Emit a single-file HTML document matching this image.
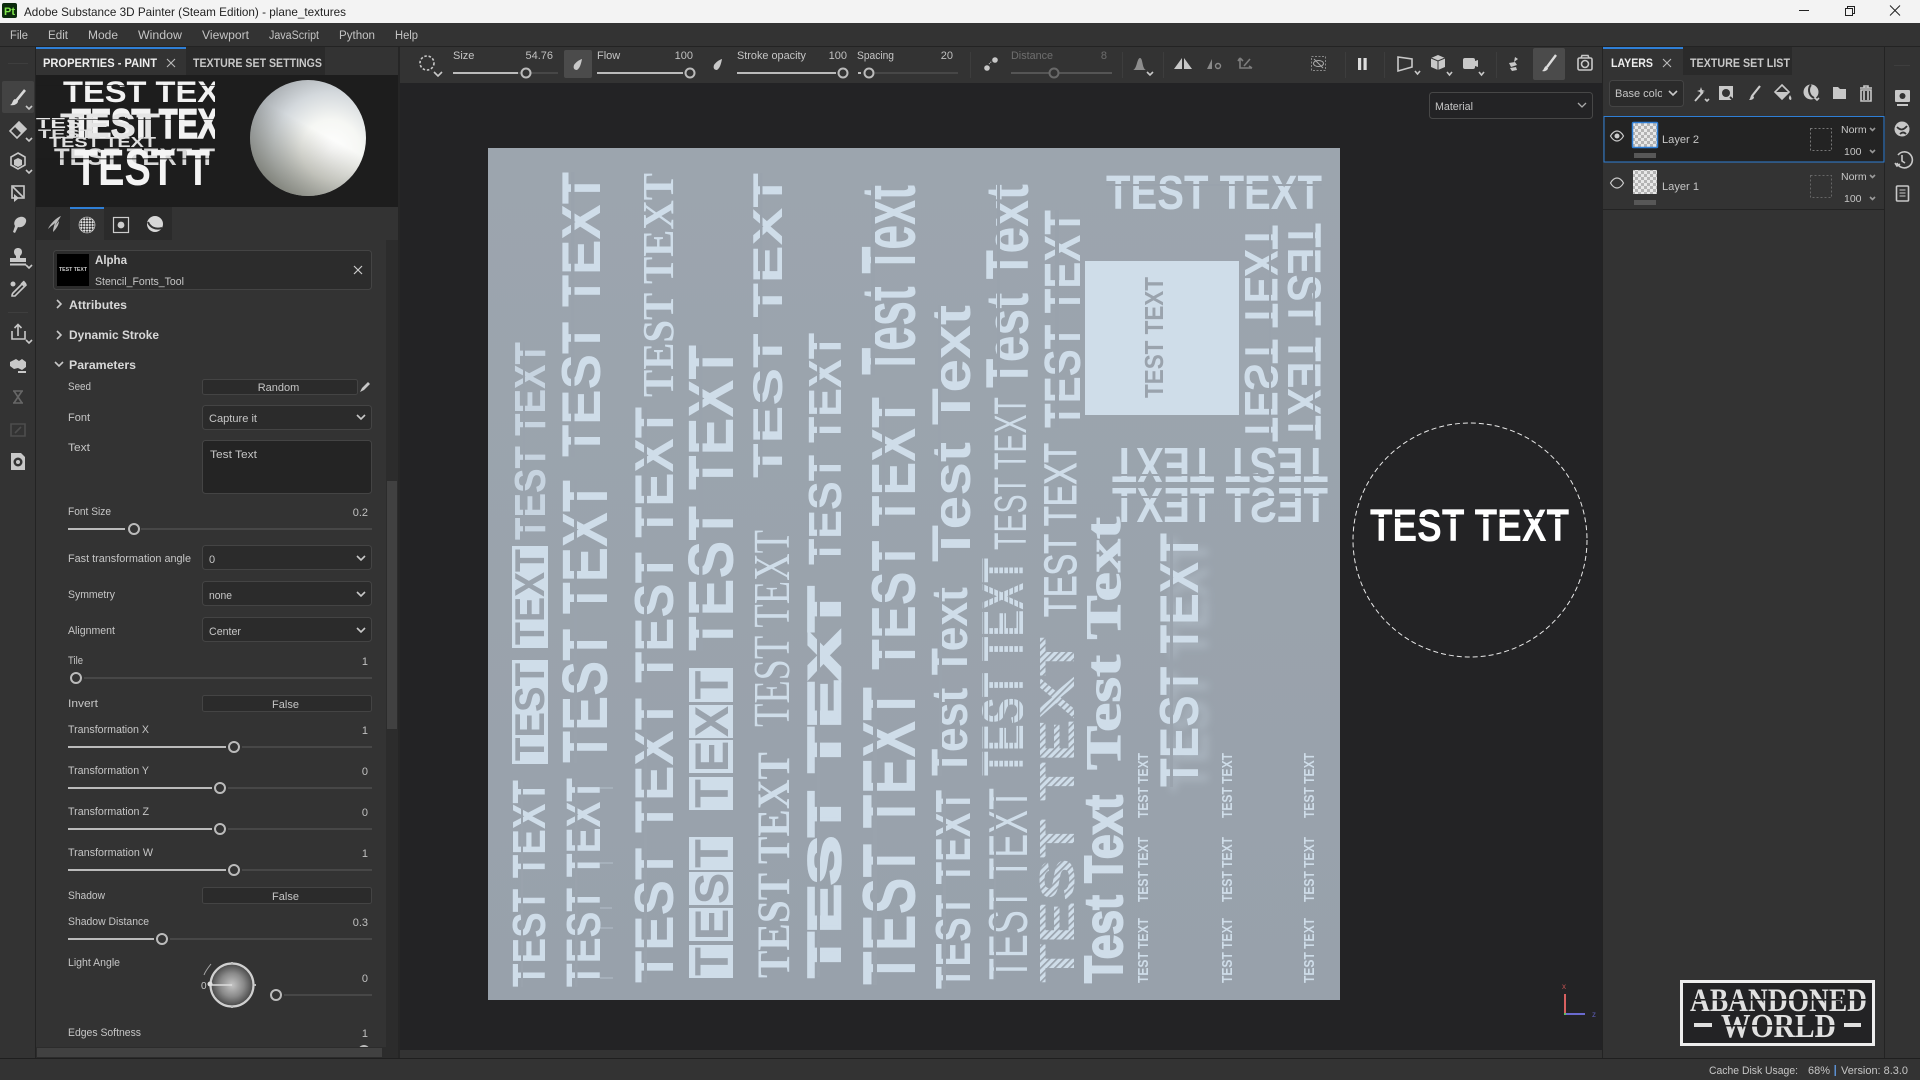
<!DOCTYPE html>
<html><head><meta charset="utf-8"><title>Adobe Substance 3D Painter</title>
<style>
html,body{margin:0;padding:0;width:1920px;height:1080px;overflow:hidden;background:#333}
svg{display:block;position:absolute;left:0;top:0}
text{font-family:"Liberation Sans",sans-serif;white-space:pre}
.l{font-size:11px;fill:#c6c6c6}
.h{font-size:12px;fill:#d8d8d8;font-weight:bold}
.m{font-size:11.5px;fill:#c4c4c4}
.t{font-size:11.5px;font-weight:bold}
.v{font-size:11px;fill:#c0c0c0;text-anchor:end}
.c text{font-weight:bold;fill:#cfdde9}
.c text.r{font-weight:normal}
.c text.s{font-family:"Liberation Serif",serif}
.c text.d{fill:#9aa3ad}
.gap rect{fill:#9aa3ad}
.ic{fill:none;stroke:#c8c8c8;stroke-width:1.6}
.if{fill:#c8c8c8;stroke:none}
.dim{opacity:.4}
</style></head><body>
<svg width="1920" height="1080" viewBox="0 0 1920 1080" xmlns="http://www.w3.org/2000/svg">
<defs>
<linearGradient id="cv" x1="0" y1="0" x2="0" y2="1"><stop offset="0" stop-color="#9ca5ae"/><stop offset="1" stop-color="#98a1ab"/></linearGradient>
<radialGradient id="sph" cx="0.7" cy="0.6" r="0.8"><stop offset="0" stop-color="#ffffff"/><stop offset=".32" stop-color="#f6f7f4"/><stop offset=".62" stop-color="#d3d8dc"/><stop offset=".9" stop-color="#a9aeb2"/><stop offset="1" stop-color="#8a8c8c"/></radialGradient>
<linearGradient id="sph2" x1=".6" y1=".45" x2=".3" y2="1"><stop offset="0" stop-color="#50503f" stop-opacity="0"/><stop offset="1" stop-color="#50503f" stop-opacity=".6"/></linearGradient>
<radialGradient id="dial" cx=".5" cy=".5" r=".5"><stop offset="0" stop-color="#c4c4c4"/><stop offset=".55" stop-color="#8a8a8a"/><stop offset="1" stop-color="#464646"/></radialGradient>
<pattern id="chk" width="6" height="6" patternUnits="userSpaceOnUse"><rect width="6" height="6" fill="#e8e8e8"/><rect width="3" height="3" fill="#b4b4b4"/><rect x="3" y="3" width="3" height="3" fill="#b4b4b4"/></pattern>
<pattern id="ck2" width="4" height="4" patternUnits="userSpaceOnUse" patternTransform="rotate(45 87 225)"><rect width="4" height="4" fill="#e2e2e2"/><rect width="2" height="2" fill="#333"/><rect x="2" y="2" width="2" height="2" fill="#333"/></pattern>
<pattern id="dots" width="5" height="5" patternUnits="userSpaceOnUse"><rect width="5" height="5" fill="#cfdde9"/><rect y="0" width="5" height="1.3" fill="#9aa3ad"/></pattern>
<pattern id="rope" width="5" height="5" patternUnits="userSpaceOnUse" patternTransform="rotate(45)"><rect width="5" height="5" fill="#cfdde9"/><rect width="5" height="1.7" fill="#9aa3ad"/></pattern>
<filter id="bl" x="-30%" y="-30%" width="160%" height="160%"><feGaussianBlur stdDeviation="4"/></filter>
<clipPath id="pv"><rect x="36" y="75" width="179" height="132"/></clipPath>
<clipPath id="bc"><rect x="1612" y="80" width="50" height="26"/></clipPath>
<clipPath id="pn"><rect x="36" y="240" width="350" height="807"/></clipPath>
</defs>

<!-- base -->
<rect width="1920" height="1080" fill="#333"/>
<!-- title bar -->
<rect width="1920" height="23" fill="#f3f3f3"/>
<rect x="2" y="3" width="15" height="15" rx="2" fill="#0b2a0c"/>
<text x="4" y="15" style="font-size:11px;font-weight:bold;fill:#7fe84a">Pt</text>
<text x="24" y="16" style="font-size:12px;fill:#222" textLength="322" lengthAdjust="spacingAndGlyphs">Adobe Substance 3D Painter (Steam Edition) - plane_textures</text>
<path d="M1799 10.5h10" stroke="#222" fill="none"/>
<path d="M1845.5 8.5h7v7h-7zM1847.5 8.5v-2h7v7h-2" stroke="#222" fill="none"/>
<path d="M1890 5.5l10 10M1900 5.5l-10 10" stroke="#222" fill="none"/>

<!-- menu -->
<rect y="23" width="1920" height="23" fill="#333"/>
<rect y="46" width="1920" height="1" fill="#232323"/>
<text class="m" x="10" y="39" textLength="18" lengthAdjust="spacingAndGlyphs">File</text>
<text class="m" x="48" y="39" textLength="20" lengthAdjust="spacingAndGlyphs">Edit</text>
<text class="m" x="88" y="39" textLength="30" lengthAdjust="spacingAndGlyphs">Mode</text>
<text class="m" x="138" y="39" textLength="44" lengthAdjust="spacingAndGlyphs">Window</text>
<text class="m" x="202" y="39" textLength="47" lengthAdjust="spacingAndGlyphs">Viewport</text>
<text class="m" x="269" y="39" textLength="50" lengthAdjust="spacingAndGlyphs">JavaScript</text>
<text class="m" x="339" y="39" textLength="36" lengthAdjust="spacingAndGlyphs">Python</text>
<text class="m" x="395" y="39" textLength="23" lengthAdjust="spacingAndGlyphs">Help</text>

<!-- viewport -->
<rect x="398" y="47" width="2" height="1011" fill="#262626"/>
<rect x="400" y="83" width="1203" height="967" fill="#232325"/>
<rect x="400" y="1050" width="1203" height="8" fill="#333"/>

<!-- canvas -->
<rect x="488" y="148" width="852" height="852" fill="url(#cv)"/>
<g class="c">
<!-- A -->
<text transform="translate(545,987) rotate(-90)" font-size="46.5" textLength="207" lengthAdjust="spacingAndGlyphs">TEST TEXT</text>
<text transform="translate(545,540) rotate(-90)" font-size="43.6" textLength="198" lengthAdjust="spacingAndGlyphs" opacity=".85">TEST TEXT</text>
<!-- B -->
<text transform="translate(600,987) rotate(-90)" font-size="48" textLength="209" lengthAdjust="spacingAndGlyphs">TEST TEXT</text>
<text transform="translate(607,763) rotate(-90)" font-size="64" textLength="283" lengthAdjust="spacingAndGlyphs">TEST TEXT</text>
<text transform="translate(600,457) rotate(-90)" font-size="55" textLength="285" lengthAdjust="spacingAndGlyphs">TEST TEXT</text>
<!-- C -->
<text transform="translate(673,983) rotate(-90)" font-size="55" textLength="285" lengthAdjust="spacingAndGlyphs">TEST TEXT</text>
<text transform="translate(673,683) rotate(-90)" font-size="55" textLength="276" lengthAdjust="spacingAndGlyphs">TEST TEXT</text>
<text class="s" transform="translate(673,397) rotate(-90)" font-size="44" textLength="224" lengthAdjust="spacingAndGlyphs">TEST TEXT</text>
<!-- D heavy -->
<text transform="translate(733,651) rotate(-90)" font-size="64" textLength="306" lengthAdjust="spacingAndGlyphs">TEST TEXT</text>
<!-- E -->
<text transform="translate(782,478) rotate(-90)" font-size="42" textLength="305" lengthAdjust="spacingAndGlyphs">TEST TEXT</text>
<text class="s r" transform="translate(789,727) rotate(-90)" font-size="52" textLength="197" lengthAdjust="spacingAndGlyphs">TEST TEXT</text>
<text class="s" transform="translate(789,978) rotate(-90)" font-size="47" textLength="226" lengthAdjust="spacingAndGlyphs">TEST TEXT</text>
<!-- F -->
<text transform="translate(841,565) rotate(-90)" font-size="46.5" textLength="232" lengthAdjust="spacingAndGlyphs">TEST TEXT</text>
<text transform="translate(840,977) rotate(-90)" font-size="45" textLength="390" lengthAdjust="spacingAndGlyphs" stroke="#cfdde9" stroke-width="2.5">TEST TEXT</text>
<!-- G -->
<text transform="translate(915,375) rotate(-90)" font-size="77" textLength="190" lengthAdjust="spacingAndGlyphs">Test Text</text>
<text transform="translate(915,670) rotate(-90)" font-size="62" textLength="273" lengthAdjust="spacingAndGlyphs">TEST TEXT</text>
<text transform="translate(915,985) rotate(-90)" font-size="75" textLength="298" lengthAdjust="spacingAndGlyphs">TEST TEXT</text>
<!-- H -->
<text transform="translate(970,562) rotate(-90)" font-size="55" textLength="257" lengthAdjust="spacingAndGlyphs">Test Text</text>
<text transform="translate(967,776) rotate(-90)" font-size="51" textLength="189" lengthAdjust="spacingAndGlyphs">Test Text</text>
<text transform="translate(970,989) rotate(-90)" font-size="49" textLength="199" lengthAdjust="spacingAndGlyphs">TEST TEXT</text>
<!-- I -->
<text transform="translate(1028,388) rotate(-90)" font-size="60" textLength="204" lengthAdjust="spacingAndGlyphs">Test Text</text>
<text class="r" transform="translate(1026,550) rotate(-90)" font-size="45" textLength="153" lengthAdjust="spacingAndGlyphs">TEST TEXT</text>
<text style="fill:url(#dots)" transform="translate(1023,776) rotate(-90)" font-size="58" textLength="218" lengthAdjust="spacingAndGlyphs">TEST TEXT</text>
<text class="r" transform="translate(1027,980) rotate(-90)" font-size="55" textLength="192" lengthAdjust="spacingAndGlyphs">TEST TEXT</text>
<!-- J -->
<text transform="translate(1080,428) rotate(-90)" font-size="51" textLength="218" lengthAdjust="spacingAndGlyphs">TEST TEXT</text>
<text class="r" transform="translate(1076,617) rotate(-90)" font-size="45" textLength="174" lengthAdjust="spacingAndGlyphs" stroke="#cfdde9">TEST TEXT</text>
<text style="fill:url(#rope)" transform="translate(1074,983) rotate(-90)" font-size="49" textLength="346" lengthAdjust="spacingAndGlyphs">TEST TEXT</text>
<!-- K -->
<text transform="translate(1122,983) rotate(-90)" font-size="54" textLength="188" lengthAdjust="spacingAndGlyphs" stroke="#cfdde9" stroke-width="2">Test Text</text>
<text class="s" transform="translate(1120,770) rotate(-90)" font-size="50" textLength="253" lengthAdjust="spacingAndGlyphs" stroke="#cfdde9">Test Text</text>
<!-- small columns -->
<g font-size="14.5">
<text transform="translate(1148,818) rotate(-90)" textLength="65" lengthAdjust="spacingAndGlyphs">TEST TEXT</text>
<text transform="translate(1148,902) rotate(-90)" textLength="65" lengthAdjust="spacingAndGlyphs">TEST TEXT</text>
<text transform="translate(1148,983) rotate(-90)" textLength="65" lengthAdjust="spacingAndGlyphs">TEST TEXT</text>
<text transform="translate(1232,818) rotate(-90)" textLength="65" lengthAdjust="spacingAndGlyphs">TEST TEXT</text>
<text transform="translate(1232,902) rotate(-90)" textLength="65" lengthAdjust="spacingAndGlyphs">TEST TEXT</text>
<text transform="translate(1232,983) rotate(-90)" textLength="65" lengthAdjust="spacingAndGlyphs">TEST TEXT</text>
<text transform="translate(1314,818) rotate(-90)" textLength="65" lengthAdjust="spacingAndGlyphs">TEST TEXT</text>
<text transform="translate(1314,902) rotate(-90)" textLength="65" lengthAdjust="spacingAndGlyphs">TEST TEXT</text>
<text transform="translate(1314,983) rotate(-90)" textLength="65" lengthAdjust="spacingAndGlyphs">TEST TEXT</text>
</g>
<!-- M with soft shadow -->
<text transform="translate(1208,792) rotate(-90)" font-size="55" textLength="254" lengthAdjust="spacingAndGlyphs" filter="url(#bl)" opacity=".3">TEST TEXT</text>
<text transform="translate(1198,787) rotate(-90)" font-size="55" textLength="254" lengthAdjust="spacingAndGlyphs">TEST TEXT</text>
<!-- top right -->
<text x="1106" y="209" font-size="48" textLength="216" lengthAdjust="spacingAndGlyphs">TEST TEXT</text>
<text transform="translate(1288,223) rotate(90)" font-size="47" textLength="217" lengthAdjust="spacingAndGlyphs">TEST TEXT</text>
<text transform="matrix(0,-1,-1,0,1245,442)" font-size="47" textLength="217" lengthAdjust="spacingAndGlyphs">TEST TEXT</text>
<text transform="translate(1328,448) rotate(180)" font-size="49" textLength="216" lengthAdjust="spacingAndGlyphs">TEST TEXT</text>
<text transform="matrix(-1,0,0,1,1328,522)" font-size="49" textLength="216" lengthAdjust="spacingAndGlyphs">TEST TEXT</text>
</g>
<!-- stencil gaps -->
<g class="gap">
<rect x="521" y="780" width="2" height="207"/>
<rect x="523" y="342" width="2" height="198"/>
<rect x="575" y="778" width="2.5" height="209"/>
<rect x="574" y="480" width="3" height="283"/>
<rect x="571" y="172" width="3.500" height="285"/>
<rect x="644" y="698" width="3" height="285"/>
<rect x="644" y="407" width="3" height="276"/>
<rect x="699" y="345" width="3.500" height="306"/>
<rect x="760" y="173" width="2.500" height="305"/>
<rect x="817" y="333" width="2.500" height="232"/>
<rect x="817" y="587" width="3" height="390"/>
<rect x="871" y="185" width="4" height="190"/>
<rect x="882" y="397" width="3" height="273"/>
<rect x="873" y="687" width="4" height="298"/>
<rect x="938" y="305" width="3" height="257"/>
<rect x="939" y="587" width="3" height="189"/>
<rect x="943" y="790" width="3" height="199"/>
<rect x="997" y="184" width="3" height="204"/>
<rect x="994" y="788" width="2" height="192"/>
<rect x="1055" y="210" width="4" height="218"/>
<rect x="1170" y="533" width="3" height="254"/>
<rect x="1106" y="184" width="216" height="2"/>
<rect x="1313" y="223" width="2" height="217"/>
<rect x="1269" y="225" width="2" height="217"/>
<rect x="1112" y="474" width="216" height="2"/>
<rect x="1112" y="496" width="216" height="2"/>
</g>
<!-- boxed text on top of the stencil columns -->
<g class="c">
<rect x="512" y="660" width="36" height="104" fill="#cfdde9"/><rect x="512" y="546" width="36" height="102" fill="#cfdde9"/>
<text class="d" transform="translate(544,761) rotate(-90)" font-size="42" textLength="98" lengthAdjust="spacingAndGlyphs">TEST</text>
<text class="d" transform="translate(544,645) rotate(-90)" font-size="42" textLength="96" lengthAdjust="spacingAndGlyphs">TEXT</text>
<rect x="689" y="945" width="44" height="33" fill="#cfdde9"/><rect x="689" y="908" width="44" height="33" fill="#cfdde9"/><rect x="689" y="872" width="44" height="33" fill="#cfdde9"/><rect x="689" y="837" width="44" height="33" fill="#cfdde9"/>
<rect x="689" y="777" width="44" height="33" fill="#cfdde9"/><rect x="689" y="740" width="44" height="33" fill="#cfdde9"/><rect x="689" y="705" width="44" height="33" fill="#cfdde9"/><rect x="689" y="668" width="44" height="34" fill="#cfdde9"/>
<g text-anchor="middle">
<text class="d" transform="translate(728,961.5) rotate(-90)" font-size="47">T</text>
<text class="d" transform="translate(728,924.5) rotate(-90)" font-size="47">E</text>
<text class="d" transform="translate(728,888.5) rotate(-90)" font-size="47">S</text>
<text class="d" transform="translate(728,853.5) rotate(-90)" font-size="47">T</text>
<text class="d" transform="translate(728,793.5) rotate(-90)" font-size="47">T</text>
<text class="d" transform="translate(728,756.5) rotate(-90)" font-size="47">E</text>
<text class="d" transform="translate(728,721.5) rotate(-90)" font-size="47">X</text>
<text class="d" transform="translate(728,685) rotate(-90)" font-size="47">T</text>
</g>
<rect x="1085" y="261" width="154" height="154" fill="#cfdde9"/>
<text class="d" transform="translate(1163,398) rotate(-90)" font-size="26" textLength="121" lengthAdjust="spacingAndGlyphs">TEST TEXT</text>
</g>
<!-- streaks beside column B -->
<path d="M600 788h13M600 863h13M600 908h12M600 928h13M600 978h13" stroke="#cfdde9" opacity=".5" fill="none"/>

<!-- brush circle -->
<circle cx="1470" cy="540" r="117" fill="none" stroke="#e8e8e8" stroke-width="1" stroke-dasharray="5 3"/>
<text x="1370" y="541" style="font-size:45px;font-weight:bold;fill:#fff" textLength="199" lengthAdjust="spacingAndGlyphs">TEST TEXT</text>
<rect x="1370" y="517" width="199" height="1.5" fill="#232325"/>

<!-- material dropdown -->
<rect x="1429.5" y="92.5" width="163" height="26" rx="3" fill="#232325" stroke="#474747"/>
<text class="l" x="1435" y="110" textLength="38" lengthAdjust="spacingAndGlyphs">Material</text>
<path d="M1578 103l4 4 4-4" fill="none" stroke="#aaa" stroke-width="1.3"/>

<!-- axis -->
<path d="M1565 994v20" stroke="#d86060" stroke-width="2"/><path d="M1565 1014h20" stroke="#6a6ad0" stroke-width="2"/>
<rect x="1564" y="1013" width="2" height="2" fill="#5fc05f"/>
<text x="1562" y="989" style="font-size:8px;fill:#c05050">x</text>
<text x="1592" y="1017" style="font-size:8px;fill:#5a5ab0">z</text>

<!-- toolbar -->
<rect x="400" y="47" width="1203" height="36" fill="#333"/>
<circle cx="427" cy="63" r="7" class="ic" stroke-dasharray="2.5 1.8" fill="none"/>
<path d="M434 72l4 4 4-4" class="ic" stroke-width="1.1"/>
<text class="l" x="453" y="59">Size</text><text class="v" x="553" y="59">54.76</text>
<path d="M453 73h105" stroke="#474747" stroke-width="2"/><path d="M453 73h65" stroke="#bbb" stroke-width="2"/><circle cx="526" cy="73" r="4.5" fill="#333" stroke="#bbb" stroke-width="2"/>
<rect x="564" y="50" width="28" height="28" rx="2" fill="#4b4b4b"/>
<path d="M582 59c-1 5-2 9-5 11-3 0-4-2-3-5 2-3 5-5 8-6z" class="if"/>
<text class="l" x="597" y="59">Flow</text><text class="v" x="693" y="59">100</text>
<path d="M597 73h86" stroke="#bbb" stroke-width="2"/><circle cx="690" cy="73" r="4.5" fill="#333" stroke="#bbb" stroke-width="2"/>
<path d="M722 59c-1 5-2 9-5 11-3 0-4-2-3-5 2-3 5-5 8-6z" class="if"/>
<text class="l" x="737" y="59" textLength="69" lengthAdjust="spacingAndGlyphs">Stroke opacity</text><text class="v" x="847" y="59">100</text>
<path d="M737 73h99" stroke="#bbb" stroke-width="2"/><circle cx="843" cy="73" r="4.5" fill="#333" stroke="#bbb" stroke-width="2"/>
<text class="l" x="857" y="59" textLength="37" lengthAdjust="spacingAndGlyphs">Spacing</text><text class="v" x="953" y="59">20</text>
<path d="M875 73h83" stroke="#474747" stroke-width="2"/><path d="M858 73h3" stroke="#bbb" stroke-width="2"/><circle cx="869" cy="73" r="4.5" fill="#333" stroke="#bbb" stroke-width="2"/>
<rect x="970" y="52" width="1" height="26" fill="#3d3d3d"/>
<circle cx="987" cy="68" r="2.8" class="if"/><circle cx="995" cy="60" r="2.8" class="if"/><path d="M989 64l3-3" stroke="#c8c8c8" stroke-dasharray="1 1"/>
<g class="dim">
<text class="l" x="1011" y="59" textLength="42" lengthAdjust="spacingAndGlyphs">Distance</text><text class="v" x="1107" y="59">8</text>
<path d="M1011 73h101" stroke="#888" stroke-width="2"/><circle cx="1054" cy="73" r="4.5" fill="#333" stroke="#bbb" stroke-width="2"/>
</g>
<rect x="1122" y="52" width="1" height="26" fill="#3d3d3d"/>
<path d="M1133 70c4-1 4-12 7-12s2 11 6 12z" fill="#8d8d8d"/><path d="M1147 72l3 3 3-3" class="ic" stroke-width="1"/>
<rect x="1163" y="52" width="1" height="26" fill="#3d3d3d"/>
<path d="M1174 69l8-11v11zM1184 58l8 11h-8z" class="if"/>
<path d="M1207 69l5-10v10z" fill="#8a8a8a"/><circle cx="1218" cy="66" r="2.5" fill="none" stroke="#8a8a8a" stroke-width="1.4"/>
<path d="M1240 58v10h12M1240 58l-2 3M1240 58l3 3M1252 68l-3-2M1244 66l6-7" class="ic" stroke-width="1.1" opacity=".5"/>
<rect x="1311.5" y="56.5" width="14" height="14" fill="none" stroke="#888" stroke-dasharray="2 1.5"/><path d="M1314 59l9 9" stroke="#aaa"/><ellipse cx="1318.5" cy="63.5" rx="5" ry="3" fill="none" stroke="#aaa"/>
<rect x="1345" y="52" width="1" height="26" fill="#3d3d3d"/>
<rect x="1358" y="58" width="3.2" height="12" fill="#ddd"/><rect x="1363.5" y="58" width="3.2" height="12" fill="#ddd"/>
<rect x="1384" y="52" width="1" height="26" fill="#3d3d3d"/>
<path d="M1398 57l14 2v8l-14 4z" class="ic" stroke-width="1.3"/><path d="M1415 71l2.5 3 2.5-3" class="ic" stroke-width="1"/>
<path d="M1438 55l7 3v9l-7 3-7-3v-9z" class="if"/><path d="M1431 58l7 3 7-3M1438 61v9" stroke="#333" fill="none"/><path d="M1447 72l2.5 3 2.5-3" class="ic" stroke-width="1"/>
<rect x="1463" y="58" width="12" height="11" rx="2" class="if"/><path d="M1475 61l3-1v7l-3-1z" class="if"/><path d="M1479 72l2.5 3 2.5-3" class="ic" stroke-width="1"/>
<rect x="1496" y="52" width="1" height="26" fill="#3d3d3d"/>
<path d="M1515 57l3 2-4 3zM1509 63l6-1 2 3-6 2zM1510 68l6-1 1 3-5 1z" class="if"/>
<rect x="1533" y="48" width="32" height="32" rx="2" fill="#4b4b4b"/>
<path d="M1556 55l-9 12" stroke="#ddd" stroke-width="2.4" fill="none"/><path d="M1546 66c-2 1-2 4-4 5 3 1 6-1 6-3z" fill="#ddd"/>
<rect x="1578" y="58" width="14" height="12" rx="1.5" class="ic"/><circle cx="1585" cy="64" r="3.5" class="ic" stroke-width="1.3"/><path d="M1581 58l1-2.5h6l1 2.5" class="ic" stroke-width="1.2"/>

<!-- left strip -->
<rect x="0" y="47" width="35" height="1011" fill="#333"/>
<rect x="35" y="47" width="1" height="1011" fill="#232323"/>
<rect x="8" y="63" width="20" height="1" fill="#3e3e3e"/><rect x="8" y="312" width="20" height="1" fill="#3e3e3e"/>
<rect x="2" y="81" width="32" height="32" rx="2" fill="#434343"/>
<path d="M25 90l-9 11" stroke="#d8d8d8" stroke-width="2.6" fill="none"/><path d="M15 99c-3 1-2 5-5 6 4 1 8-1 8-4z" fill="#d8d8d8"/><path d="M26 106l3 3 3-3" class="ic" stroke-width="1"/>
<path d="M10 131l9-9 7 7-9 9z" class="ic" stroke-width="1.4"/><path d="M14.500 126.500l4.500-4.500 7 7-4.500 4.500z" class="if"/><path d="M26 138l3 3 3-3" class="ic" stroke-width="1"/>
<path d="M18 153l7 4v8l-7 4-7-4v-8z" class="ic"/><path d="M14 160l4-2 4 2v5l-4 2-4-2z" class="if"/><path d="M26 170l3 3 3-3" class="ic" stroke-width="1"/>
<rect x="12" y="186" width="12" height="12" class="ic" stroke-width="1.4"/><path d="M13 187l10 10" class="ic" stroke-width="1"/><path d="M14 194l5 4-5 4z" class="if"/>
<path d="M20 217c4-1 7 2 6 5-1 4-5 6-8 5l-3 6-2-1 2-6c-2-3 0-8 5-9z" class="if"/>
<path d="M14 252c0-3 2-4 4-4s4 1 4 4c0 2-1 3-2 4v2h6v4H10v-4h6v-2c-1-1-2-2-2-4z" class="if"/><rect x="10" y="263.500" width="16" height="2" fill="#c8c8c8"/><path d="M26 265l3 3 3-3" class="ic" stroke-width="1"/>
<path d="M24 282l-11 11c-1 1-1 3-1 3l3 0 11-11z" class="ic"/><path d="M22 285l3-3" stroke="#c8c8c8" stroke-width="4"/><circle cx="13" cy="284" r="2.5" class="if"/>
<path d="M12 331v8h13v-8M18 336v-11M14.500 328l3.500-3.500 3.500 3.500" class="ic" stroke-width="1.7"/><path d="M26 340l3 3 3-3" class="ic" stroke-width="1"/>
<path d="M10 362l6-3 3 2 3-2 4 3v5l-4 3-4-2-4 1-4-3z" class="if"/><circle cx="22" cy="367" r="2.2" class="if"/><path d="M18 372h8" stroke="#c8c8c8" stroke-width="2"/>
<path d="M13 391h10M13 403h10M14 391l8 12M22 391l-8 12" class="ic" opacity=".35"/>
<path d="M11 424h14v12H11zM15 433l6-6" class="ic" opacity=".18"/>
<path d="M11 453h10l4 4v13H11z" class="if"/><circle cx="18" cy="462" r="4.500" fill="#333"/><circle cx="18" cy="462" r="2" fill="#c8c8c8"/>

<!-- properties panel -->
<rect x="36" y="47" width="362" height="28" fill="#333"/>
<rect x="186" y="47" width="139" height="28" fill="#2a2a2a"/>
<rect x="36" y="47" width="150" height="2" fill="#2f7fd6"/>
<text class="t" x="43" y="67" fill="#eee" textLength="114" lengthAdjust="spacingAndGlyphs">PROPERTIES - PAINT</text>
<path d="M167 59l8 8M175 59l-8 8" stroke="#bbb" fill="none" stroke-width="1.1"/>
<text class="t" x="193" y="67" fill="#c8c8c8" textLength="129" lengthAdjust="spacingAndGlyphs">TEXTURE SET SETTINGS</text>
<rect x="36" y="75" width="362" height="132" fill="#1d1d1d"/>
<g clip-path="url(#pv)">
<text x="63" y="102" style="font-size:30px;font-weight:bold" textLength="176" lengthAdjust="spacingAndGlyphs" fill="#f2f2f2">TEST TEXT</text>
<text x="72" y="138" style="font-size:42px;font-weight:bold" textLength="165" lengthAdjust="spacingAndGlyphs" fill="#f2f2f2" stroke="#f2f2f2" stroke-width="1.5">TEST TEXT</text>
<text x="60" y="137" style="font-size:34px;font-weight:bold" textLength="100" lengthAdjust="spacingAndGlyphs" fill="#e4e4e4">TEST</text>
<text x="36" y="128" style="font-size:15px;font-weight:bold" textLength="60" lengthAdjust="spacingAndGlyphs" fill="#e8e8e8">TEST</text>
<text x="38" y="138" style="font-size:12px;font-weight:bold" textLength="55" lengthAdjust="spacingAndGlyphs" fill="#ddd">TEST</text>
<text x="49" y="147" style="font-size:15px;font-weight:bold" textLength="107" lengthAdjust="spacingAndGlyphs" fill="#e0e0e0">TEST TEXT</text>
<text x="54" y="165" style="font-size:24px;font-weight:bold" textLength="161" lengthAdjust="spacingAndGlyphs" fill="#d8d8d8">TEST TEXT T</text>
<text x="74" y="185" style="font-size:51px;font-weight:bold" textLength="136" lengthAdjust="spacingAndGlyphs" fill="#f4f4f4">TEST T</text>
<rect x="36" y="85" width="179" height="1" fill="#1d1d1d" opacity=".7"/><rect x="36" y="119" width="179" height="1" fill="#1d1d1d" opacity=".6"/><rect x="36" y="158" width="179" height="1.5" fill="#1d1d1d" opacity=".6"/>
</g>
<circle cx="308" cy="138" r="58" fill="url(#sph)"/>
<circle cx="308" cy="138" r="58" fill="url(#sph2)"/>
<rect x="36" y="207" width="362" height="33" fill="#333"/>
<rect x="36" y="207" width="136" height="33" fill="#2b2b2b"/>
<rect x="70" y="207" width="34" height="33" fill="#333"/>
<rect x="70" y="207" width="34" height="2" fill="#2f7fd6"/>
<path d="M61 216c-5 2-11 8-13 13 3-3 5-4 7-6-1 3-2 6-2 9 3-3 6-7 6-11l-4 5z" fill="#bbb"/>
<circle cx="87" cy="225" r="8" fill="url(#ck2)" stroke="#e2e2e2" stroke-width=".6"/>
<rect x="113.500" y="217.500" width="15" height="15" fill="none" stroke="#ccc" stroke-width="1.2"/><circle cx="121" cy="225" r="3.4" fill="#ccc"/>
<circle cx="155" cy="224" r="8" fill="#d8d8d8"/><path d="M148 222c2 5 7 8 14 6" fill="none" stroke="#333" stroke-width="2"/>

<!-- alpha -->
<rect x="53.500" y="250.500" width="318" height="39" rx="3" fill="#2c2c2c" stroke="#444"/>
<rect x="57" y="254" width="32" height="32" fill="#000"/>
<text x="59" y="271" style="font-size:5px;font-weight:bold;fill:#ccc" textLength="28" lengthAdjust="spacingAndGlyphs">TEST TEXT</text>
<text class="h" x="95" y="264" textLength="32" lengthAdjust="spacingAndGlyphs">Alpha</text>
<text class="l" x="95" y="285" textLength="89" lengthAdjust="spacingAndGlyphs">Stencil_Fonts_Tool</text>
<path d="M354 266l8 8M362 266l-8 8" stroke="#ccc" fill="none" stroke-width="1.2"/>

<g clip-path="url(#pn)">
<path d="M57 300l4 4-4 4M57 331l4 4-4 4" class="ic" stroke-width="1"/><path d="M55 362l4 4 4-4" class="ic" stroke-width="1"/>
<text class="h" x="69" y="309" textLength="58" lengthAdjust="spacingAndGlyphs">Attributes</text>
<text class="h" x="69" y="339" textLength="90" lengthAdjust="spacingAndGlyphs">Dynamic Stroke</text>
<text class="h" x="69" y="369" textLength="67" lengthAdjust="spacingAndGlyphs">Parameters</text>

<text class="l" x="68" y="390" textLength="23" lengthAdjust="spacingAndGlyphs">Seed</text>
<rect x="202.500" y="379.500" width="155" height="15" rx="2" fill="#2b2b2b" stroke="#444"/>
<text class="l" x="278.500" y="391" text-anchor="middle">Random</text>
<path d="M360 392l2-4 6-6 2 2-6 6z" class="if"/>

<text class="l" x="68" y="421" textLength="22" lengthAdjust="spacingAndGlyphs">Font</text>
<rect x="202.500" y="405.500" width="169" height="24" rx="3" fill="#2b2b2b" stroke="#444"/>
<text class="l" x="209" y="422" textLength="48" lengthAdjust="spacingAndGlyphs">Capture it</text>
<path d="M357 415l4 4 4-4" class="ic" stroke-width="1.3"/>

<text class="l" x="68" y="451" textLength="22" lengthAdjust="spacingAndGlyphs">Text</text>
<rect x="202.500" y="440.500" width="169" height="53" rx="3" fill="#242424" stroke="#444"/>
<text class="l" x="210" y="458" textLength="47" lengthAdjust="spacingAndGlyphs">Test Text</text>

<text class="l" x="68" y="515" textLength="43" lengthAdjust="spacingAndGlyphs">Font Size</text><text class="v" x="368" y="516">0.2</text>
<path d="M141 529h231" stroke="#474747" stroke-width="2"/><path d="M68 529h57" stroke="#bbb" stroke-width="2"/><circle cx="134" cy="529" r="5" fill="#333" stroke="#bbb" stroke-width="2"/>

<text class="l" x="68" y="562" textLength="123" lengthAdjust="spacingAndGlyphs">Fast transformation angle</text>
<rect x="202.500" y="545.500" width="169" height="24" rx="3" fill="#2b2b2b" stroke="#444"/>
<text class="l" x="209" y="563">0</text><path d="M357 556l4 4 4-4" class="ic" stroke-width="1.3"/>

<text class="l" x="68" y="598" textLength="47" lengthAdjust="spacingAndGlyphs">Symmetry</text>
<rect x="202.500" y="581.500" width="169" height="24" rx="3" fill="#2b2b2b" stroke="#444"/>
<text class="l" x="209" y="599" textLength="23" lengthAdjust="spacingAndGlyphs">none</text><path d="M357 592l4 4 4-4" class="ic" stroke-width="1.3"/>

<text class="l" x="68" y="634" textLength="47" lengthAdjust="spacingAndGlyphs">Alignment</text>
<rect x="202.500" y="617.500" width="169" height="24" rx="3" fill="#2b2b2b" stroke="#444"/>
<text class="l" x="209" y="635" textLength="32" lengthAdjust="spacingAndGlyphs">Center</text><path d="M357 628l4 4 4-4" class="ic" stroke-width="1.3"/>

<text class="l" x="68" y="664" textLength="15" lengthAdjust="spacingAndGlyphs">Tile</text><text class="v" x="368" y="665">1</text>
<path d="M84 678h288" stroke="#474747" stroke-width="2"/><circle cx="76" cy="678" r="5" fill="#333" stroke="#bbb" stroke-width="2"/>

<text class="l" x="68" y="707" textLength="30" lengthAdjust="spacingAndGlyphs">Invert</text>
<rect x="202.500" y="695.500" width="169" height="16" rx="2" fill="#2b2b2b" stroke="#444"/>
<text class="l" x="285.500" y="708" text-anchor="middle">False</text>

<text class="l" x="68" y="733" textLength="81" lengthAdjust="spacingAndGlyphs">Transformation X</text><text class="v" x="368" y="734">1</text>
<path d="M242 747h130" stroke="#474747" stroke-width="2"/><path d="M68 747h158" stroke="#bbb" stroke-width="2"/><circle cx="234" cy="747" r="5" fill="#333" stroke="#bbb" stroke-width="2"/>

<text class="l" x="68" y="774" textLength="81" lengthAdjust="spacingAndGlyphs">Transformation Y</text><text class="v" x="368" y="775">0</text>
<path d="M228 788h144" stroke="#474747" stroke-width="2"/><path d="M68 788h144" stroke="#bbb" stroke-width="2"/><circle cx="220" cy="788" r="5" fill="#333" stroke="#bbb" stroke-width="2"/>

<text class="l" x="68" y="815" textLength="81" lengthAdjust="spacingAndGlyphs">Transformation Z</text><text class="v" x="368" y="816">0</text>
<path d="M228 829h144" stroke="#474747" stroke-width="2"/><path d="M68 829h144" stroke="#bbb" stroke-width="2"/><circle cx="220" cy="829" r="5" fill="#333" stroke="#bbb" stroke-width="2"/>

<text class="l" x="68" y="856" textLength="85" lengthAdjust="spacingAndGlyphs">Transformation W</text><text class="v" x="368" y="857">1</text>
<path d="M242 870h130" stroke="#474747" stroke-width="2"/><path d="M68 870h158" stroke="#bbb" stroke-width="2"/><circle cx="234" cy="870" r="5" fill="#333" stroke="#bbb" stroke-width="2"/>

<text class="l" x="68" y="899" textLength="37" lengthAdjust="spacingAndGlyphs">Shadow</text>
<rect x="202.500" y="887.500" width="169" height="16" rx="2" fill="#2b2b2b" stroke="#444"/>
<text class="l" x="285.500" y="900" text-anchor="middle">False</text>

<text class="l" x="68" y="925" textLength="81" lengthAdjust="spacingAndGlyphs">Shadow Distance</text><text class="v" x="368" y="926">0.3</text>
<path d="M170 939h202" stroke="#474747" stroke-width="2"/><path d="M68 939h86" stroke="#bbb" stroke-width="2"/><circle cx="162" cy="939" r="5" fill="#333" stroke="#bbb" stroke-width="2"/>

<text class="l" x="68" y="966" textLength="52" lengthAdjust="spacingAndGlyphs">Light Angle</text>
<circle cx="232" cy="985" r="21.500" fill="url(#dial)" stroke="#d0d0d0" stroke-width="2.200"/>
<path d="M232 962v2M232 1006v2M254 985h2" stroke="#bbb" stroke-width="2"/>
<path d="M232 985h-22" stroke="#ddd" stroke-width="1.500"/><circle cx="210" cy="984" r="2.500" fill="#ddd"/>
<path d="M204 975c1-3 3-6 7-11" fill="none" stroke="#aaa"/>
<text class="l" x="201" y="989" style="font-size:10px">0</text>
<text class="v" x="368" y="982">0</text>
<path d="M284 995h88" stroke="#474747" stroke-width="2"/><circle cx="276" cy="995" r="5" fill="#333" stroke="#bbb" stroke-width="2"/>

<text class="l" x="68" y="1036" textLength="73" lengthAdjust="spacingAndGlyphs">Edges Softness</text><text class="v" x="368" y="1037">1</text>
<circle cx="364" cy="1051" r="5" fill="#333" stroke="#bbb" stroke-width="2"/>
</g>
<!-- panel scrollbars -->
<rect x="386" y="240" width="12" height="818" fill="#2c2c2c"/>
<rect x="387" y="481" width="10" height="248" fill="#414141"/>
<rect x="36" y="1047" width="362" height="11" fill="#2c2c2c"/>
<rect x="37" y="1048" width="345" height="9" fill="#414141"/>

<!-- right panel -->
<rect x="1602" y="47" width="1" height="1011" fill="#232323"/>
<rect x="1603" y="47" width="281" height="1011" fill="#333"/>
<rect x="1884" y="47" width="1" height="1011" fill="#232323"/>
<rect x="1894" y="65" width="16" height="1" fill="#3e3e3e"/>
<rect x="1603" y="47" width="80" height="2" fill="#2f7fd6"/>
<rect x="1683" y="47" width="109" height="28" fill="#2a2a2a"/>
<text class="t" x="1611" y="67" fill="#eee" textLength="42" lengthAdjust="spacingAndGlyphs">LAYERS</text>
<path d="M1663 59l8 8M1671 59l-8 8" stroke="#bbb" fill="none" stroke-width="1.1"/>
<text class="t" x="1690" y="67" fill="#c8c8c8" textLength="100" lengthAdjust="spacingAndGlyphs">TEXTURE SET LIST</text>
<rect x="1609.500" y="80.500" width="74" height="26" rx="3" fill="#2b2b2b" stroke="#444"/>
<g clip-path="url(#bc)"><text class="l" x="1615" y="97" textLength="52" lengthAdjust="spacingAndGlyphs">Base color</text></g>
<path d="M1669 91l4 4 4-4" class="ic" stroke-width="1.100"/>
<!-- layer tool icons -->
<path d="M1695 101l8-9" stroke="#ccc" stroke-width="1.800"/><path d="M1701 87l1 3 3 1-3 1-1 3-1-3-3-1 3-1z" class="if"/><path d="M1705 99l2 2 2-2" class="ic" stroke-width="1"/>
<path d="M1719 86h14v14h-14z" class="if"/><circle cx="1726" cy="93" r="4" fill="#333"/><path d="M1730 97l3 3" stroke="#333" stroke-width="2"/>
<path d="M1760 86l-8 10" stroke="#ccc" stroke-width="2.200"/><path d="M1752 95c-2 1-1 3-3 5 3 0 5-1 5-3z" class="if"/>
<path d="M1782 85l7 7-7 7-7-7z" class="ic"/><path d="M1776 92h12l-6 7z" class="if"/><path d="M1790 95c1 2 2 3 1 5-2 0-3-2-1-5z" class="if"/>
<circle cx="1811" cy="92" r="7.500" class="if"/><path d="M1811 85c-3 3-3 10 3 13" fill="none" stroke="#333" stroke-width="2"/><path d="M1815 98l2 2 2-2" class="ic" stroke-width="1"/>
<path d="M1833 87h5l2 2h6v10h-13z" class="if"/>
<path d="M1860 88h12M1864 88v-2h4v2M1861 90h10v11h-10zM1864 91v9M1868 91v9" class="ic" stroke-width="1.200"/>

<!-- layers -->
<rect x="1604" y="116.500" width="280" height="45.500" fill="#232323" stroke="#2f7fd6"/>
<path d="M1610.500 136c2-3.500 4-5 6.500-5s4.500 1.500 6.500 5c-2 3.500-4 5-6.500 5s-4.500-1.500-6.500-5z" fill="none" stroke="#ccc" stroke-width="1.200"/><circle cx="1617" cy="136" r="2.500" fill="#ccc"/>
<rect x="1632.500" y="122.500" width="25" height="25" rx="1" fill="url(#chk)" stroke="#2f7fd6" stroke-width="1.500"/>
<rect x="1634" y="153" width="22" height="5" fill="#575757"/>
<text class="l" x="1662" y="143" textLength="37" lengthAdjust="spacingAndGlyphs">Layer 2</text>
<rect x="1810.500" y="128.500" width="21" height="22" fill="none" stroke="#777" stroke-dasharray="2 2"/>
<text class="l" x="1841" y="133" style="font-size:10.500px">Norm</text><path d="M1870 128l2.500 2.500 2.500-2.500" class="ic" stroke-width=".9" opacity=".7"/>
<text class="l" x="1844" y="155" style="font-size:10.500px">100</text><path d="M1870 150l2.500 2.500 2.500-2.500" class="ic" stroke-width=".9" opacity=".7"/>

<path d="M1610.500 183c2-3.500 4-5 6.500-5s4.500 1.500 6.500 5c-2 3.500-4 5-6.500 5s-4.500-1.500-6.500-5z" fill="none" stroke="#ccc" stroke-width="1.200"/>
<rect x="1633" y="170" width="24" height="24" fill="url(#chk)"/>
<rect x="1634" y="200" width="22" height="5" fill="#575757"/>
<text class="l" x="1662" y="190" textLength="37" lengthAdjust="spacingAndGlyphs">Layer 1</text>
<rect x="1810.500" y="175.500" width="21" height="22" fill="none" stroke="#666" stroke-dasharray="2 2"/>
<text class="l" x="1841" y="180" style="font-size:10.500px">Norm</text><path d="M1870 175l2.500 2.500 2.500-2.500" class="ic" stroke-width=".9" opacity=".7"/>
<text class="l" x="1844" y="202" style="font-size:10.500px">100</text><path d="M1870 197l2.500 2.500 2.500-2.500" class="ic" stroke-width=".9" opacity=".7"/>
<rect x="1603" y="209" width="281" height="1" fill="#232323"/>

<!-- right strip icons -->
<rect x="1895" y="90" width="15" height="12" rx="1" class="if"/><circle cx="1902.500" cy="96" r="3" fill="#333"/><rect x="1897" y="104" width="11" height="2" fill="#c8c8c8"/>
<circle cx="1902" cy="129" r="7.500" class="if"/><path d="M1897 127c3 3 6 4 10-1M1900 134c2-2 4-2 6 0" fill="none" stroke="#333" stroke-width="1.800"/>
<path d="M1898 155a8 8 0 1 1-1 8" class="ic"/><path d="M1902 155v6l3 2M1895 163l2 3 3-2" class="ic" stroke-width="1.300"/>
<rect x="1896.500" y="186" width="12" height="15" rx="1" class="ic" stroke-width="1.300"/><path d="M1899.500 190h6M1899.500 193h6M1899.500 196h6" stroke="#c8c8c8"/>

<!-- watermark -->
<rect x="1681.500" y="981.500" width="192" height="63" fill="#232325" stroke="#eee" stroke-width="3"/>
<text x="1690" y="1011" style="font-family:'Liberation Serif',serif;font-size:33px;font-weight:bold;fill:#e0e0e0" textLength="177" lengthAdjust="spacingAndGlyphs">ABANDONED</text>
<text x="1721" y="1037" style="font-family:'Liberation Serif',serif;font-size:34px;font-weight:bold;fill:#e0e0e0" textLength="115" lengthAdjust="spacingAndGlyphs">WORLD</text>
<rect x="1690" y="999" width="177" height="1.500" fill="#232325"/><rect x="1721" y="1025" width="115" height="1.500" fill="#232325"/>
<rect x="1694" y="1023" width="18" height="4" fill="#e0e0e0"/><rect x="1844" y="1023" width="17" height="4" fill="#e0e0e0"/>

<!-- status -->
<rect y="1058" width="1920" height="1" fill="#1f1f1f"/>
<rect y="1059" width="1920" height="21" fill="#333"/>
<text class="l" x="1709" y="1074" textLength="89" lengthAdjust="spacingAndGlyphs">Cache Disk Usage:</text>
<text class="l" x="1808" y="1074" textLength="22" lengthAdjust="spacingAndGlyphs">68%</text>
<rect x="1834.500" y="1065" width="1.500" height="11" fill="#5b8fd0"/>
<text class="l" x="1841" y="1074" textLength="67" lengthAdjust="spacingAndGlyphs">Version: 8.3.0</text>
</svg>
</body></html>
